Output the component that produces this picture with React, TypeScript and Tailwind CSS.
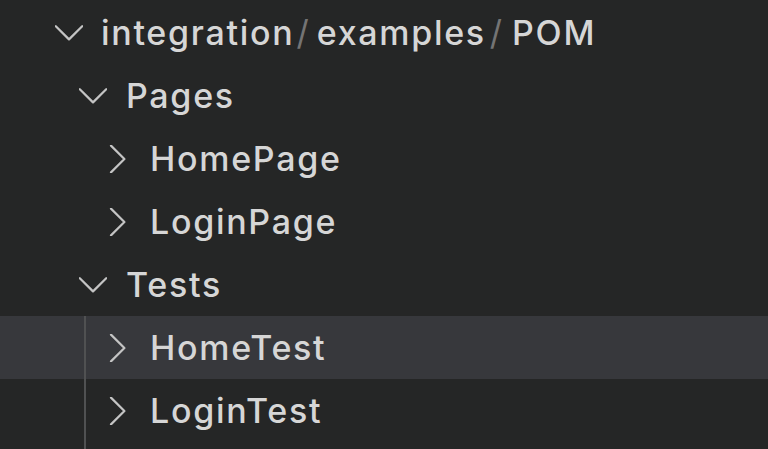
import React from "react";

const ChevronDown = () => (
  <svg width="28" height="28" viewBox="0 0 28 28" fill="none" className="shrink-0">
    <path d="M0.8 7.2 L14 20.4 L27.2 7.2" stroke="#c4c4c4" strokeWidth="2.2" strokeLinecap="round" strokeLinejoin="round" />
  </svg>
);

const ChevronRight = () => (
  <svg width="28" height="28" viewBox="0 0 28 28" fill="none" className="shrink-0">
    <path d="M7 0.6 L20.4 14 L7 27.4" stroke="#c4c4c4" strokeWidth="2.2" strokeLinecap="round" strokeLinejoin="round" />
  </svg>
);

const Label = ({ children }: { children: React.ReactNode }) => (
  <span className="text-[34px] leading-none font-medium text-[#d6d6d6] whitespace-nowrap tracking-[1.7px]">{children}</span>
);

const Sep = () => (
  <span className="text-[34px] leading-none text-[#747474] pl-[2px] pr-[8px]">/</span>
);

export default function App() {
  return (
    <div
      className="w-[768px] h-[449px] bg-[#252626] flex flex-col pt-[1px] overflow-hidden select-none"
      style={{ fontFamily: "Inter, 'Noto Sans', sans-serif" }}
    >
      <div className="h-[63px] shrink-0 flex items-center pl-[55px] gap-[18px]">
        <ChevronDown />
        <span className="flex items-center">
          <Label>integration</Label>
          <Sep />
          <Label>examples</Label>
          <span className="text-[34px] leading-none text-[#747474] pl-[4px] pr-[10px]">/</span>
          <Label>POM</Label>
        </span>
      </div>
      <div className="h-[63px] shrink-0 flex items-center pl-[79px] gap-[19px]">
        <ChevronDown />
        <Label>Pages</Label>
      </div>
      <div className="h-[63px] shrink-0 flex items-center pl-[104px] gap-[18px]">
        <ChevronRight />
        <Label>HomePage</Label>
      </div>
      <div className="h-[63px] shrink-0 flex items-center pl-[104px] gap-[18px]">
        <ChevronRight />
        <Label>LoginPage</Label>
      </div>
      <div className="h-[63px] shrink-0 flex items-center pl-[79px] gap-[19px]">
        <ChevronDown />
        <Label>Tests</Label>
      </div>
      <div className="relative flex-1 flex flex-col">
        <div className="absolute left-[84px] top-0 bottom-0 w-[2px] bg-[#505152]" />
        <div className="h-[63px] shrink-0 flex items-center pl-[104px] gap-[18px] bg-[#37383c]">
          <ChevronRight />
          <Label>HomeTest</Label>
        </div>
        <div className="h-[63px] shrink-0 flex items-center pl-[104px] gap-[18px]">
          <ChevronRight />
          <Label>LoginTest</Label>
        </div>
      </div>
    </div>
  );
}
